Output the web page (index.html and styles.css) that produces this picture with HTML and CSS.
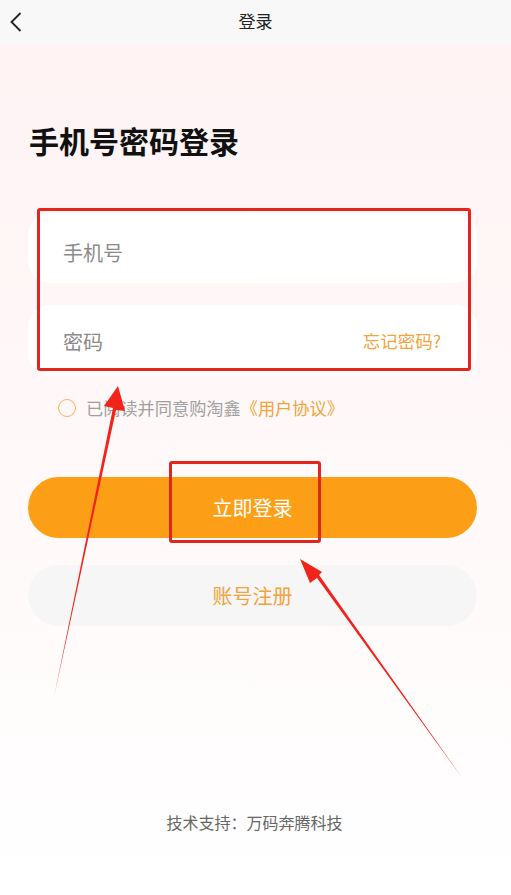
FILE: index.html
```html
<!DOCTYPE html>
<html lang="zh-CN">
<head>
<meta charset="utf-8">
<title>登录</title>
<link rel="stylesheet" href="styles.css">
</head>
<body>
<div class="page">
  <header class="nav">
    <svg class="back" width="14" height="22" viewBox="0 0 14 22"><path d="M11.5 2 L2.5 11 L11.5 20" fill="none" stroke="#222" stroke-width="1.8"/></svg>
    <div class="nav-title">登录</div>
  </header>
  <main class="main">
    <h1 class="title">手机号密码登录</h1>
    <div class="fields">
      <div class="field field-phone"><span class="ph">手机号</span></div>
      <div class="field field-pwd"><span class="ph">密码</span><span class="forgot">忘记密码?</span></div>
    </div>
    <div class="agree">
      <span class="radio"></span>
      <span class="agree-text">已阅读并同意购淘鑫<span class="link">《用户协议》</span></span>
    </div>
    <div class="btn btn-login">立即登录</div>
    <div class="btn btn-reg">账号注册</div>
    <div class="spacer"></div>
    <footer class="footer">技术支持：万码奔腾科技</footer>
  </main>
  <div class="mark mark-fields"></div>
  <div class="mark mark-btn"></div>
  <svg class="arrows" width="511" height="895" viewBox="0 0 511 895">
    <polygon points="54,697 113,408 104,406 118,386 125,411 116,410" fill="#f2231a"/>
    <polygon points="463,779 317,578 310,583 300,559 322,572 319,575" fill="#f2231a"/>
  </svg>
</div>
</body>
</html>
```
FILE: styles.css
```css
* { box-sizing: border-box; margin: 0; padding: 0; }
html, body { width: 511px; height: 895px; }
body {
  font-family: "Noto Sans CJK SC", "Noto Sans", sans-serif;
  background: #fff;
  overflow: hidden;
}
.page { position: relative; width: 511px; height: 895px; display: flex; flex-direction: column; }
.nav {
  height: 46px;
  background: #f8f8f8;
  display: flex;
  align-items: center;
  justify-content: center;
  position: relative;
}
.back { position: absolute; left: 9px; top: 11px; }
.nav-title { font-size: 17px; color: #222; line-height: 24px; margin-top: -4px; }
.main {
  flex: 1;
  display: flex;
  flex-direction: column;
  background: linear-gradient(#fff3f4 0%, #fff9f9 55%, #ffffff 100%);
  padding: 0 34px 0 28px;
}
.title {
  margin-top: 74px;
  margin-left: 1px;
  font-size: 30px;
  line-height: 40px;
  font-weight: 700;
  color: #111;
}
.fields { margin-top: 53px; display: flex; flex-direction: column; gap: 22px; }
.field {
  height: 70px;
  background: #fff;
  border-radius: 22px;
  display: flex;
  align-items: center;
  justify-content: space-between;
  padding: 0 36px 0 35px;
}
.field-phone { padding-top: 10px; }
.field-pwd { padding-top: 4px; }
.ph { font-size: 20px; color: #8a8a8a; line-height: 26px; }
.forgot { font-size: 17.5px; color: #f2a33a; line-height: 24px; margin-top: -2px; }
.agree { margin-top: 23px; display: flex; align-items: center; padding-left: 30px; height: 20px; }
.radio { width: 18px; height: 18px; border: 1.5px solid #f0b25c; border-radius: 50%; margin-right: 10px; flex: none; }
.agree-text { font-size: 17.2px; color: #a0a0a0; line-height: 20px; white-space: nowrap; }
.link { color: #f2a33a; }
.btn {
  height: 61px;
  border-radius: 31px;
  display: flex;
  align-items: center;
  justify-content: center;
  font-size: 20px;
  line-height: 28px;
}
.btn-login { margin-top: 59px; background: #fd9f16; color: #fff; }
.btn-reg { margin-top: 27px; background: #f6f6f6; color: #f2a33a; }
.spacer { flex: 1; }
.footer {
  text-align: center;
  font-size: 16px;
  color: #666;
  line-height: 22px;
  margin-bottom: 62px;
  padding-left: 4px;
}
.mark { position: absolute; border: 3px solid #e3261c; border-radius: 3px; }
.mark-fields { left: 37px; top: 208px; width: 434px; height: 163px; }
.mark-btn { left: 169px; top: 461px; width: 152px; height: 82px; }
.arrows { position: absolute; left: 0; top: 0; pointer-events: none; }
```
